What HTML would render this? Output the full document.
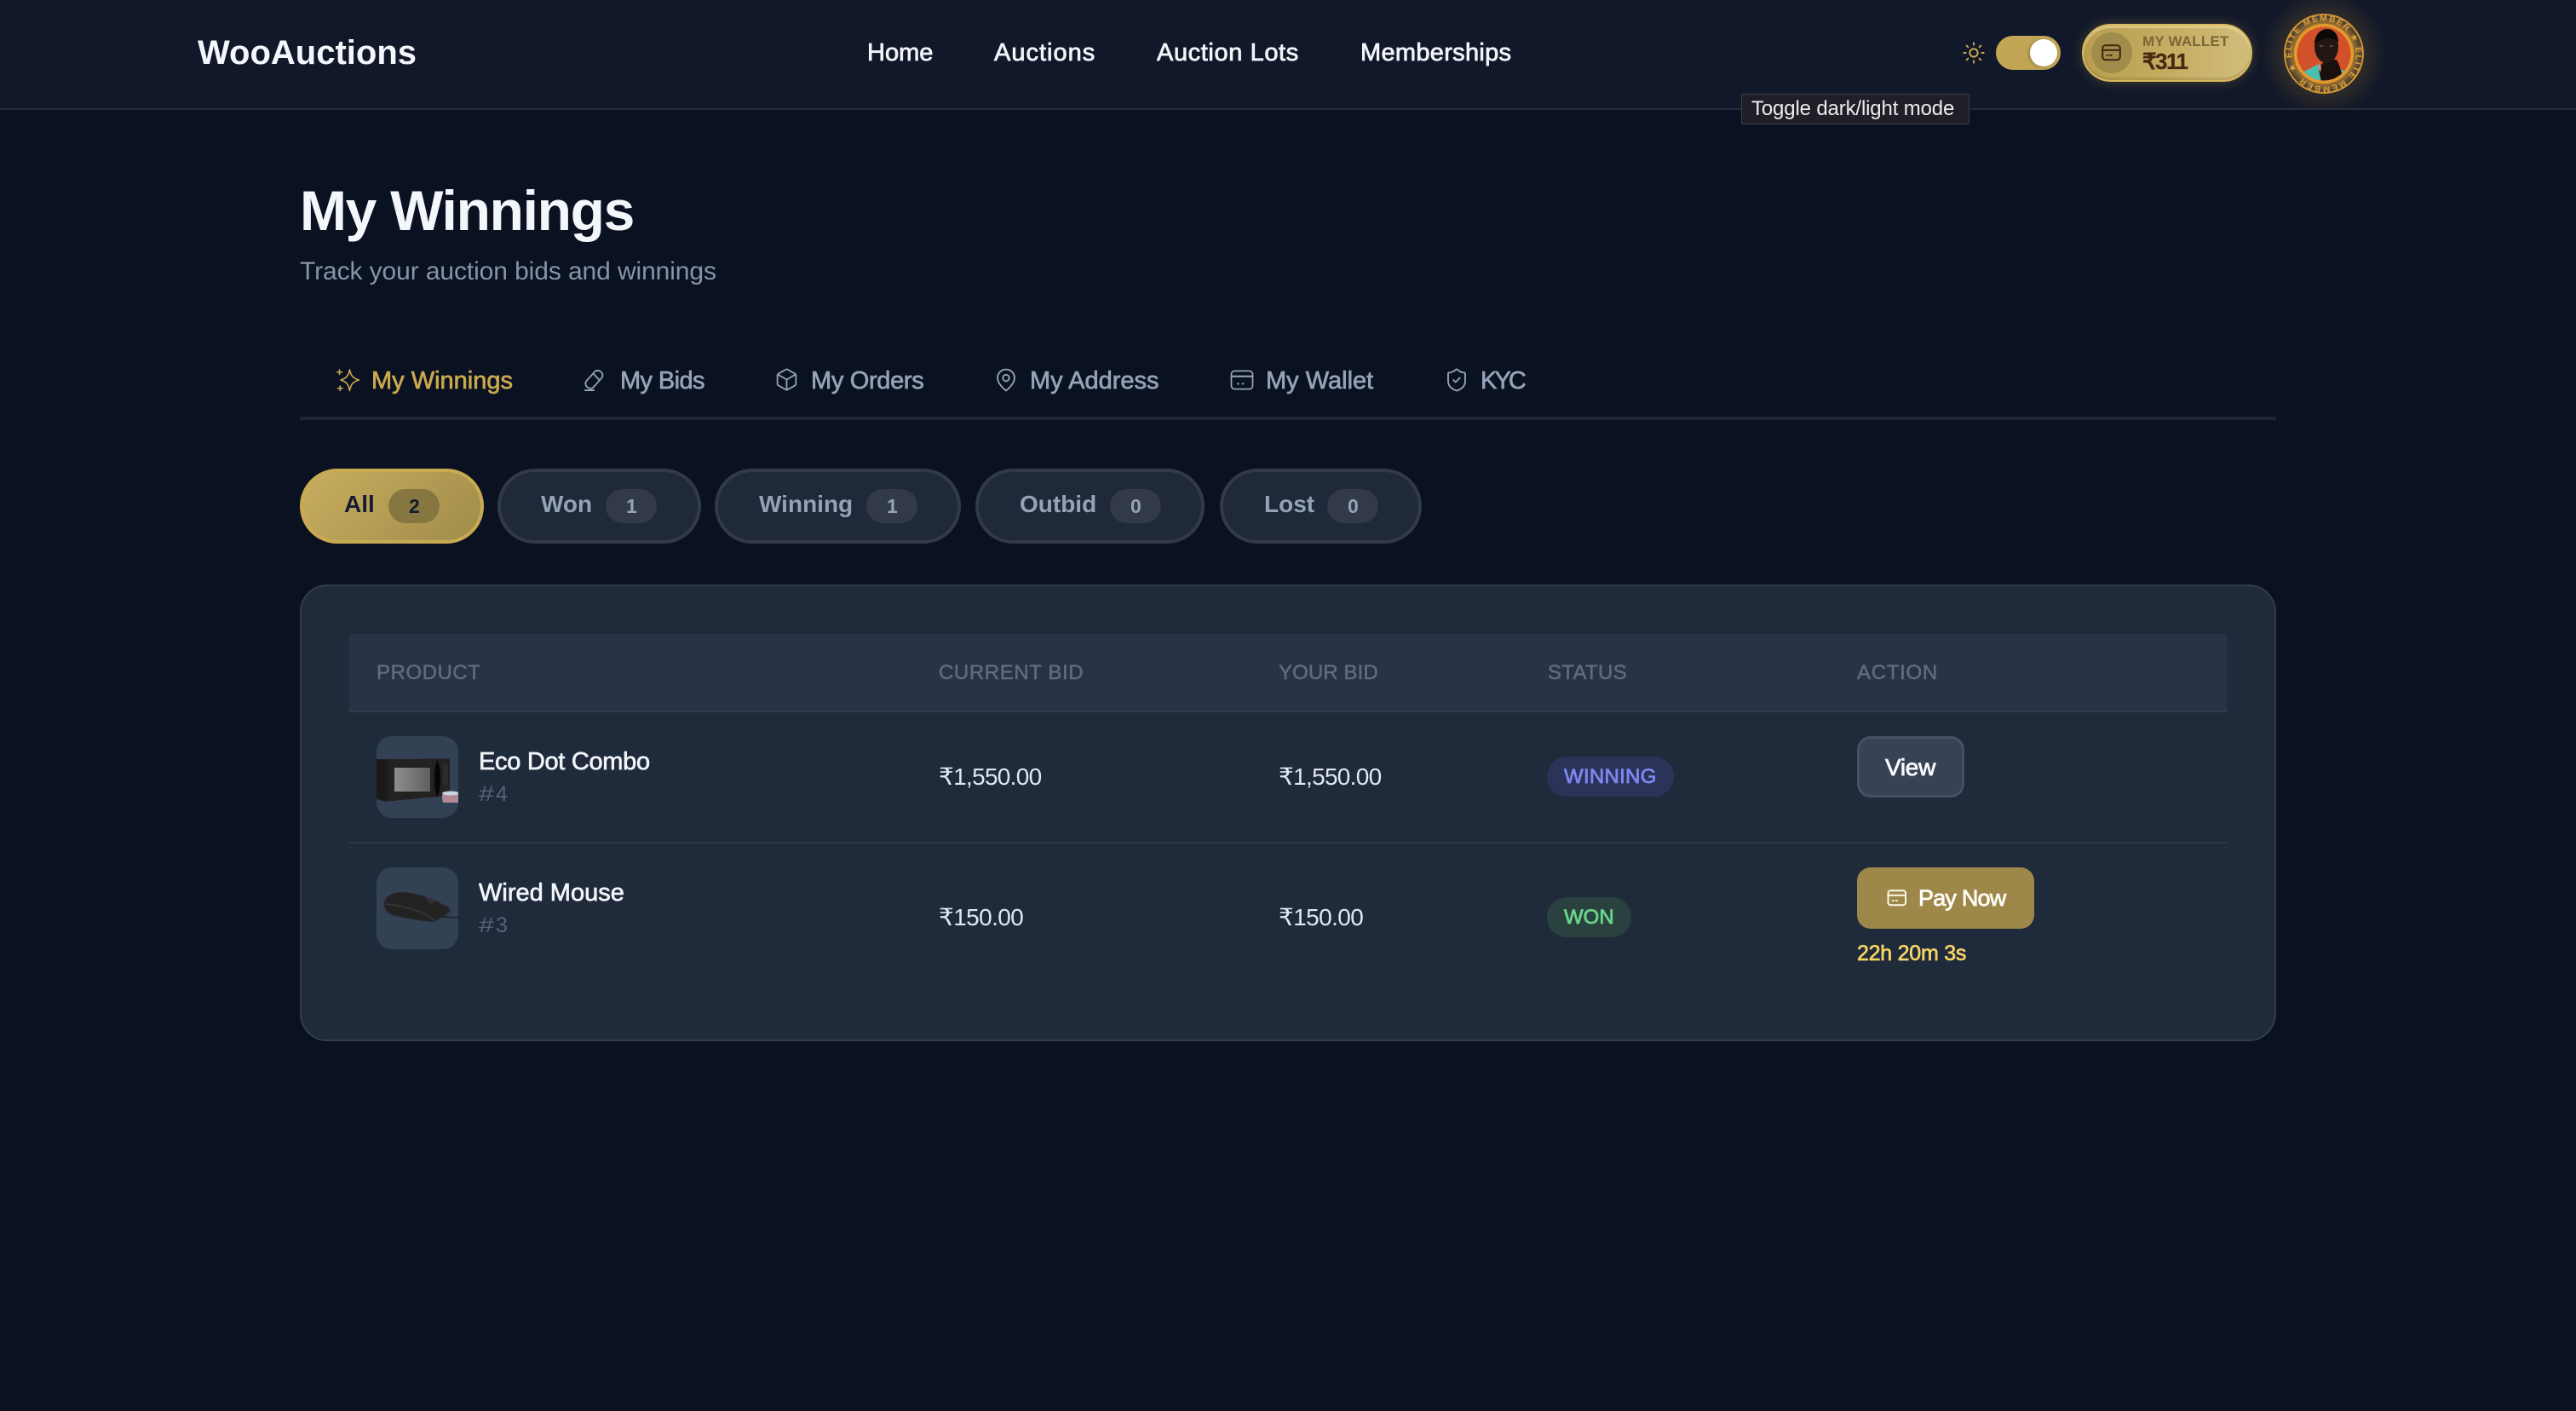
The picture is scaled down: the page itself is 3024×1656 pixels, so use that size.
<!DOCTYPE html>
<html lang="en"><head><meta charset="utf-8"><title>My Winnings - WooAuctions</title>
<style>
*{box-sizing:border-box}
html,body{margin:0;padding:0;width:3024px;height:1656px;overflow:hidden;background:#0a1120}
body{position:relative;font-family:"Liberation Sans",sans-serif}
.t{position:absolute;line-height:0;white-space:nowrap}
.b{position:absolute}
.m{-webkit-text-stroke:.8px currentColor}
header{position:absolute;left:0;top:0;width:3024px;height:129px;background:#111829;border-bottom:2px solid #232a3a}
.nav{font-size:29px;color:#f1f5f9;top:62px}
.tab{font-size:29px;color:#94a3b8;top:447px;-webkit-text-stroke:.7px currentColor}
.ic{position:absolute;fill:none;stroke:#94a3b8;stroke-width:1.5;stroke-linecap:round;stroke-linejoin:round}
.pill{position:absolute;top:550px;height:88px;border-radius:44px;background:#1f293a;border:4px solid #323a4a}
.pt{font-size:28px;font-weight:700;color:#94a3b8;top:592px}
.cnt{position:absolute;top:574px;width:60px;height:40px;border-radius:20px;background:#323a4a}
.ct{font-size:23px;font-weight:700;color:#94a3b8;top:594px}
.th{font-size:24px;color:#5f6b80;top:790px;-webkit-text-stroke:.5px currentColor}
.nm{font-size:29px;color:#f1f5f9;-webkit-text-stroke:.7px currentColor}
.id{font-size:25px;color:#556176}
.id i{font-style:normal;display:inline-block;width:20px;transform:scaleX(1.3);transform-origin:left center}
.pr{font-size:28px;color:#e2e8f0}
</style></head><body>
<header></header>
<div class="t" style="left:232px;top:62px;font-size:40px;font-weight:700;color:#f4f7fc">WooAuctions</div>
<div class="t nav m" style="left:1018px">Home</div>
<div class="t nav m" style="left:1167px;letter-spacing:1px">Auctions</div>
<div class="t nav m" style="left:1358px;letter-spacing:.6px">Auction Lots</div>
<div class="t nav m" style="left:1597px;letter-spacing:.3px">Memberships</div>

<svg class="ic" style="left:2303px;top:48px;stroke:#c9a94f;stroke-width:1.7" width="28" height="28" viewBox="0 0 24 24"><circle cx="12" cy="12" r="4"/><path d="M12 2v2M12 20v2M4.900 4.900l1.400 1.400M17.700 17.700l1.400 1.400M2 12h2M20 12h2M6.300 17.700l-1.400 1.400M19.100 4.900l-1.400 1.400"/></svg>
<div class="b" style="left:2343px;top:42px;width:76px;height:40px;border-radius:20px;background:#c2a655"></div>
<div class="b" style="left:2383px;top:46px;width:32px;height:32px;border-radius:50%;background:#fff;box-shadow:-2px 1px 4px rgba(0,0,0,.2)"></div>

<div class="b" style="left:2444px;top:28px;width:200px;height:68px;border-radius:34px;background:linear-gradient(90deg,#b99e50,#c5ac60 50%,#d1bd7c);border:2px solid #d8b85c;box-shadow:0 0 14px rgba(212,175,70,.28),inset 0 3px 1px rgba(250,235,180,.45),inset 0 -3px 1px rgba(120,95,40,.22)"></div>
<div class="b" style="left:2455px;top:38px;width:48px;height:48px;border-radius:50%;background:#a18d4b"></div>
<svg class="ic" style="left:2467px;top:52px;stroke:#4a2a10;stroke-width:2.2" width="23" height="20" viewBox="0 0 23 20"><rect x="1.200" y="1.200" width="20.600" height="17" rx="3.500"/><path d="M1.200 6.800h20.600M6.500 13h1M10.500 13h1"/></svg>
<div class="t" style="left:2515px;top:49px;font-size:17px;font-weight:700;letter-spacing:.2px;color:#7d6537">MY WALLET</div>
<div class="t" style="left:2515px;top:72px;font-size:26px;font-weight:700;letter-spacing:-1.500px;color:#4a2a10;-webkit-text-stroke:.3px #4a2a10">₹311</div>

<svg style="position:absolute;left:2648px;top:0" width="160" height="128" viewBox="2648 0 160 128">
<defs><radialGradient id="gl" gradientUnits="userSpaceOnUse" cx="2728" cy="63" r="74"><stop offset=".6" stop-color="#c88c28" stop-opacity=".17"/><stop offset="1" stop-color="#c88c28" stop-opacity="0"/></radialGradient>
<radialGradient id="bnd" gradientUnits="userSpaceOnUse" cx="2728" cy="63" r="46"><stop offset=".74" stop-color="#a97a30"/><stop offset="1" stop-color="#3a3334"/></radialGradient>
<clipPath id="av"><circle cx="2728" cy="63" r="31.500"/></clipPath></defs>
<circle cx="2728" cy="63" r="74" fill="url(#gl)"/>
<circle cx="2728" cy="63" r="46" fill="url(#bnd)" stroke="#cd9232" stroke-width="2"/>
<circle cx="2728" cy="63" r="35" fill="#e59a2b"/>
<g clip-path="url(#av)"><rect x="2690" y="24" width="76" height="76" fill="#d2502a"/>
<path d="M2697 100l6-15 17-9 33 7 7 17z" fill="#4cc0ae"/>
<path d="M2725 76l6-6 12 0 3 6 3 10-4 10-20 0-3-14z" fill="#1a100d"/>
<ellipse cx="2731" cy="54.500" rx="14" ry="19.500" fill="#231714"/><path d="M2717 52c0-12 8-18 15-18s13 6 13 15c-6-6-20-6-28 3z" fill="#0c0807"/>
<ellipse cx="2725" cy="54" rx="2.500" ry="1.200" fill="#51423c"/><ellipse cx="2737" cy="54" rx="2.500" ry="1.200" fill="#51423c"/>
<path d="M2722 73l3 6-1 6-3-6z" fill="#b89a8a"/></g>
<path id="ringp" d="M2696.300 82A37 37 0 1 1 2759.700 44A37 37 0 1 1 2696.300 82" fill="none"/>
<text font-family="Liberation Sans,sans-serif" font-size="10" font-weight="700" fill="#dfa035"><textPath href="#ringp" textLength="228" lengthAdjust="spacing">★ ELITE MEMBER ★ ELITE MEMBER</textPath></text>
</svg>

<div class="b" style="left:2044px;top:110px;width:268px;height:36px;background:#1f2027;border:1px solid #3c3d43;border-radius:2px"></div>
<div class="t" style="left:2056px;top:128px;font-size:24px;letter-spacing:-.15px;color:#ececec">Toggle dark/light mode</div>

<div class="t" style="left:352px;top:247px;font-size:66px;font-weight:700;letter-spacing:-1.300px;color:#f3f6fb">My Winnings</div>
<div class="t" style="left:352px;top:319px;font-size:30px;letter-spacing:-.1px;color:#8794aa">Track your auction bids and winnings</div>

<svg class="ic" style="left:395px;top:433px;stroke:#c9a94f;stroke-width:1.600" width="28" height="27" viewBox="0 0 28 27"><path d="M14 .800C15.200 7 17 10.800 25 13C17 15.200 15.200 19 14 25.500C12.800 19 11 15.200 3.500 13C11 10.800 12.800 7 14 .800z" transform="translate(1.500 0)"/><path d="M3.500 1v5.500M.8 3.700h5.500M4.300 20v5.500M1.500 22.700h5.500"/></svg>
<div class="t tab" style="left:436px;color:#c9a94f">My Winnings</div>
<svg class="ic" style="left:686px;top:432px;stroke-width:1.800" width="23" height="28" viewBox="0 0 23 28"><rect x="-1" y="8" width="24" height="11" rx="5" transform="rotate(-48 11 13)"/><path d="M10.500 6.500l7.500 8"/><path d="M1 26h10" stroke-width="2"/></svg>
<div class="t tab" style="left:728px;letter-spacing:-.6px">My Bids</div>
<svg class="ic" style="left:909px;top:431px" width="29" height="29" viewBox="0 0 24 24"><path d="M21 8a2 2 0 0 0-1-1.730l-7-4a2 2 0 0 0-2 0l-7 4A2 2 0 0 0 3 8v8a2 2 0 0 0 1 1.730l7 4a2 2 0 0 0 2 0l7-4A2 2 0 0 0 21 16Z"/><path d="M3.300 7l8.700 5 8.700-5M12 22V12"/></svg>
<div class="t tab" style="left:952px;letter-spacing:-.33px">My Orders</div>
<svg class="ic" style="left:1166px;top:431px" width="30" height="30" viewBox="0 0 24 24"><path d="M20 10c0 6-8 12-8 12s-8-6-8-12a8 8 0 0 1 16 0Z"/><circle cx="12" cy="10" r="3"/></svg>
<div class="t tab" style="left:1209px">My Address</div>
<svg class="ic" style="left:1443px;top:431px;stroke-width:1.400" width="30" height="30" viewBox="0 0 24 24"><rect x="2" y="3.500" width="20" height="17" rx="3"/><path d="M2 8.500h20M8 15.500h.5M12.500 15.500h.5" stroke-width="1.700"/></svg>
<div class="t tab" style="left:1486px">My Wallet</div>
<svg class="ic" style="left:1695px;top:431px" width="30" height="30" viewBox="0 0 24 24"><path d="M20 13c0 5-3.500 7.500-7.660 8.950a1 1 0 0 1-.670-.010C7.500 20.500 4 18 4 13V6a1 1 0 0 1 1-1c2 0 4.500-1.200 6.240-2.720a1.170 1.170 0 0 1 1.520 0C14.510 3.810 17 5 19 5a1 1 0 0 1 1 1z"/><path d="M9 12l2 2 4-4"/></svg>
<div class="t tab" style="left:1738px;letter-spacing:-2.900px">KYC</div>
<div class="b" style="left:352px;top:489px;width:2320px;height:4px;background:#1e2533"></div>

<div class="pill" style="left:352px;width:216px;background:linear-gradient(135deg,#c8ad5f,#a08c4a);border-color:#c9aa52"></div>
<div class="t pt" style="left:404px;color:#141c30">All</div>
<div class="cnt" style="left:456px;background:#867640"></div><div class="t ct" style="left:480px;color:#141c30">2</div>
<div class="pill" style="left:584px;width:239px"></div>
<div class="t pt" style="left:635px">Won</div>
<div class="cnt" style="left:711px"></div><div class="t ct" style="left:735px">1</div>
<div class="pill" style="left:839px;width:289px"></div>
<div class="t pt" style="left:891px">Winning</div>
<div class="cnt" style="left:1017px"></div><div class="t ct" style="left:1041px">1</div>
<div class="pill" style="left:1145px;width:269px"></div>
<div class="t pt" style="left:1197px">Outbid</div>
<div class="cnt" style="left:1303px"></div><div class="t ct" style="left:1327px">0</div>
<div class="pill" style="left:1432px;width:237px"></div>
<div class="t pt" style="left:1484px">Lost</div>
<div class="cnt" style="left:1558px"></div><div class="t ct" style="left:1582px">0</div>

<div class="b" style="left:352px;top:686px;width:2320px;height:536px;border-radius:32px;background:#1f2a3b;border:2px solid #333c4c"></div>
<div class="b" style="left:410px;top:744px;width:2204px;height:90px;background:#283345"></div>
<div class="b" style="left:410px;top:834px;width:2204px;height:2px;background:#333d4e"></div>
<div class="b" style="left:410px;top:988px;width:2204px;height:2px;background:#2e3848"></div>
<div class="t th" style="left:442px;letter-spacing:.55px">PRODUCT</div>
<div class="t th" style="left:1102px;letter-spacing:.6px">CURRENT BID</div>
<div class="t th" style="left:1501px;letter-spacing:.1px">YOUR BID</div>
<div class="t th" style="left:1817px;letter-spacing:.3px">STATUS</div>
<div class="t th" style="left:2180px;letter-spacing:.7px">ACTION</div>

<svg style="position:absolute;left:442px;top:864px" width="96" height="96" viewBox="442 864 96 96">
<defs><clipPath id="c1"><rect x="442" y="864" width="96" height="96" rx="18"/></clipPath><linearGradient id="win" x1="0" x2="1" y1="0" y2="0"><stop offset="0" stop-color="#8e8e8e"/><stop offset="1" stop-color="#5f5f5f"/></linearGradient></defs>
<g clip-path="url(#c1)"><rect x="442" y="864" width="96" height="96" fill="#334155"/>
<path d="M442 891h13v50l-13-3z" fill="#1b1a19"/><path d="M455 891l73-.500v43l-73 7z" fill="#232121"/>
<rect x="463" y="901" width="42" height="28" fill="url(#win)"/>
<path d="M513 892c5 8 6 32 0 44c-4-12-4-32 0-44z" fill="#060606"/>
<path d="M520 897h6v24h-6z" fill="#2c2c2c"/>
<path d="M519 933c2-3 17-4 19-3v12h-17c-2 0-2-6-2-9z" fill="#b18a96"/><ellipse cx="529" cy="931" rx="10" ry="2.500" fill="#c9d6e2"/></g></svg>
<div class="t nm" style="left:562px;top:894px;letter-spacing:-.3px">Eco Dot Combo</div>
<div class="t id" style="left:562px;top:932px"><i>#</i>4</div>
<div class="t pr" style="left:1102px;top:912px;letter-spacing:-.7px">₹1,550.00</div>
<div class="t pr" style="left:1501px;top:912px;letter-spacing:-.7px">₹1,550.00</div>
<div class="b" style="left:1816px;top:888px;width:149px;height:47px;border-radius:24px;background:#2b3358"></div>
<div class="t m" style="left:1836px;top:912px;font-size:24px;letter-spacing:.3px;color:#7c87f0">WINNING</div>
<div class="b" style="left:2180px;top:864px;width:126px;height:72px;border-radius:16px;background:#374254;border:3px solid #465164"></div>
<div class="t m" style="left:2213px;top:901px;font-size:28px;letter-spacing:-.3px;color:#f8fafc">View</div>

<svg style="position:absolute;left:442px;top:1018px" width="96" height="96" viewBox="442 1018 96 96">
<defs><clipPath id="c2"><rect x="442" y="1018" width="96" height="96" rx="18"/></clipPath><filter id="sf" x="-10%" y="-10%" width="120%" height="120%"><feGaussianBlur stdDeviation=".6"/></filter></defs>
<g clip-path="url(#c2)"><rect x="442" y="1018" width="96" height="96" fill="#334155"/>
<path d="M518 1076c6 0 10 1 20 .500" fill="none" stroke="#1c1c1c" stroke-width="1.500"/>
<g filter="url(#sf)"><path d="M451 1060c1-8 10-13 22-12.700c15 .700 30 6 40 11c7 3.500 14 6 15.500 9.500c.5 3-7 6.500-10.500 8.500c-4 3-7 5-10 5.500c-6 0-18-2-28-3.800c-11-2-18-3-23-6c-4-3-6-7-6-12z" fill="#242424"/>
<path d="M453 1061c18 2 42 7 57 19" fill="none" stroke="#3e3e3e" stroke-width="1.200"/>
<ellipse cx="505" cy="1057" rx="5" ry="3" fill="#333" transform="rotate(25 505 1057)"/></g></g></svg>
<div class="t nm" style="left:562px;top:1048px">Wired Mouse</div>
<div class="t id" style="left:562px;top:1086px"><i>#</i>3</div>
<div class="t pr" style="left:1102px;top:1077px;letter-spacing:-.6px">₹150.00</div>
<div class="t pr" style="left:1501px;top:1077px;letter-spacing:-.6px">₹150.00</div>
<div class="b" style="left:1816px;top:1053px;width:99px;height:47px;border-radius:24px;background:#2a423f"></div>
<div class="t m" style="left:1836px;top:1077px;font-size:24px;color:#6ad38a">WON</div>
<div class="b" style="left:2180px;top:1018px;width:208px;height:72px;border-radius:16px;background:#9e8849"></div>
<svg class="ic" style="left:2215px;top:1044px;stroke:#fbf7ea;stroke-width:2" width="24" height="20" viewBox="0 0 24 20"><rect x="1.500" y="1.200" width="20.500" height="17" rx="3"/><path d="M1.500 6.800h20.500M7 13h.8M11 13h.8"/></svg>
<div class="t m" style="left:2252px;top:1054px;font-size:27px;letter-spacing:-.8px;color:#fdfcf7">Pay Now</div>
<div class="t" style="left:2180px;top:1119px;font-size:25px;letter-spacing:-.25px;color:#f6d365;-webkit-text-stroke:.7px #f6d365">22h 20m 3s</div>
</body></html>
